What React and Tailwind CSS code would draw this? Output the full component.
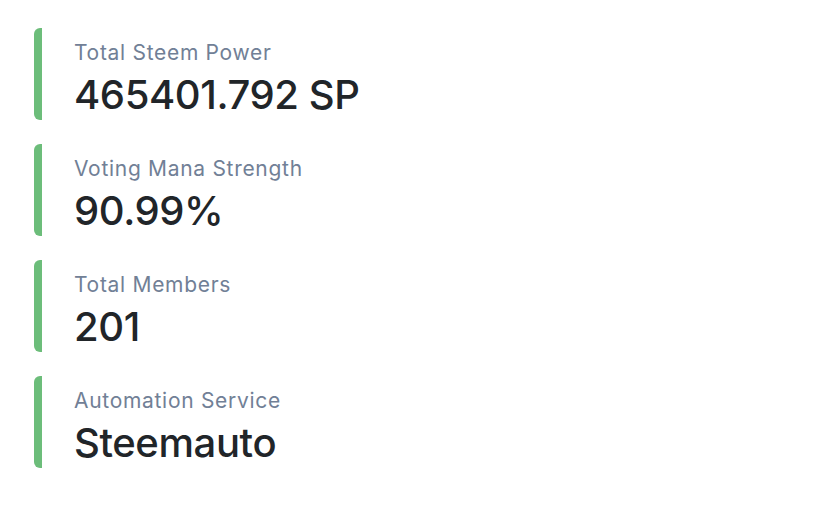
export default function App() {
  const items = [
    ["Total Steem Power", "465401.792 SP"],
    ["Voting Mana Strength", "90.99%"],
    ["Total Members", "201"],
    ["Automation Service", "Steemauto"],
  ];
  return (
    <div className="w-[833px] h-[510px] bg-white pt-[28px] pl-[34px]" style={{ fontFamily: "Inter, 'Noto Sans', sans-serif" }}>
      <div className="flex flex-col gap-[24px]">
        {items.map(([label, value]) => (
          <div key={label} className="h-[92px] border-l-[8px] border-[#6cbd7a] rounded-l-[6px] pl-[32px] pt-[11px] flex flex-col">
            <div className="text-[21px] leading-[28px] text-[#718096] tracking-[0.7px]">{label}</div>
            <div className="mt-[4px] text-[40px] leading-[48px] font-medium text-[#212529] tracking-[-0.4px]">{value}</div>
          </div>
        ))}
      </div>
    </div>
  );
}
